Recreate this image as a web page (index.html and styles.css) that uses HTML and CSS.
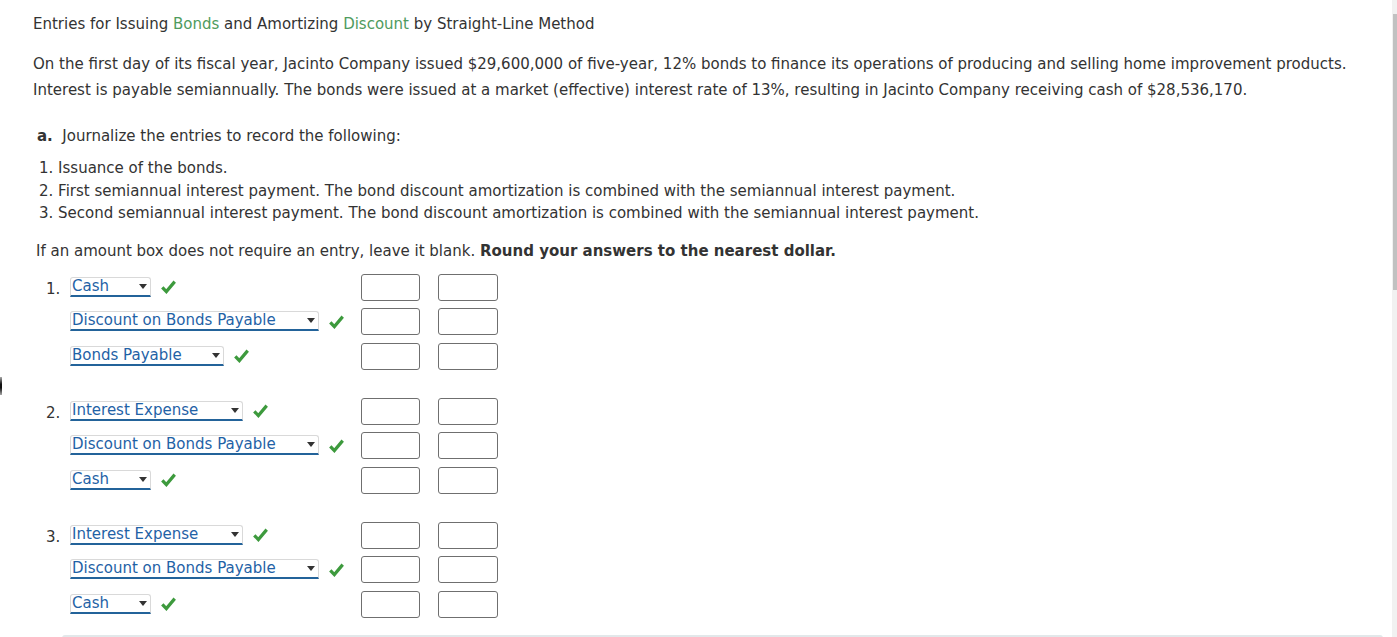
FILE: index.html
```html
<!DOCTYPE html>
<html>
<head>
<meta charset="utf-8">
<link rel="stylesheet" href="styles.css">
</head>
<body>
<div class="page">
  <div class="title">Entries for Issuing <span class="term">Bonds</span> and Amortizing <span class="term">Discount</span> by Straight-Line Method</div>
  <p class="para">On the first day of its fiscal year, Jacinto Company issued $29,600,000 of five-year, 12% bonds to finance its operations of producing and selling home improvement products. Interest is payable semiannually. The bonds were issued at a market (effective) interest rate of 13%, resulting in Jacinto Company receiving cash of $28,536,170.</p>
  <div class="part"><b>a.</b>&nbsp; Journalize the entries to record the following:</div>
  <ol class="tasks">
    <li>Issuance of the bonds.</li>
    <li>First semiannual interest payment. The bond discount amortization is combined with the semiannual interest payment.</li>
    <li>Second semiannual interest payment. The bond discount amortization is combined with the semiannual interest payment.</li>
  </ol>
  <div class="note">If an amount box does not require an entry, leave it blank. <b>Round your answers to the nearest dollar.</b></div>

  <div class="journal">
    <div class="group">
      <div class="row">
        <div class="num">1.</div>
        <div class="acct"><span class="sel w-cash">Cash<svg class="arr" viewBox="0 0 8 5"><path d="M0 0h8L4 5z"/></svg></span><svg class="chk" viewBox="0 0 14 13"><path d="M1.2 6.8L5 10.8 12.8 1.5"/></svg></div>
        <div class="box"></div><div class="box"></div>
      </div>
      <div class="row">
        <div class="num"></div>
        <div class="acct"><span class="sel w-disc">Discount on Bonds Payable<svg class="arr" viewBox="0 0 8 5"><path d="M0 0h8L4 5z"/></svg></span><svg class="chk" viewBox="0 0 14 13"><path d="M1.2 6.8L5 10.8 12.8 1.5"/></svg></div>
        <div class="box"></div><div class="box"></div>
      </div>
      <div class="row">
        <div class="num"></div>
        <div class="acct"><span class="sel w-bp">Bonds Payable<svg class="arr" viewBox="0 0 8 5"><path d="M0 0h8L4 5z"/></svg></span><svg class="chk" viewBox="0 0 14 13"><path d="M1.2 6.8L5 10.8 12.8 1.5"/></svg></div>
        <div class="box"></div><div class="box"></div>
      </div>
    </div>

    <div class="group">
      <div class="row">
        <div class="num">2.</div>
        <div class="acct"><span class="sel w-int">Interest Expense<svg class="arr" viewBox="0 0 8 5"><path d="M0 0h8L4 5z"/></svg></span><svg class="chk" viewBox="0 0 14 13"><path d="M1.2 6.8L5 10.8 12.8 1.5"/></svg></div>
        <div class="box"></div><div class="box"></div>
      </div>
      <div class="row">
        <div class="num"></div>
        <div class="acct"><span class="sel w-disc">Discount on Bonds Payable<svg class="arr" viewBox="0 0 8 5"><path d="M0 0h8L4 5z"/></svg></span><svg class="chk" viewBox="0 0 14 13"><path d="M1.2 6.8L5 10.8 12.8 1.5"/></svg></div>
        <div class="box"></div><div class="box"></div>
      </div>
      <div class="row">
        <div class="num"></div>
        <div class="acct"><span class="sel w-cash">Cash<svg class="arr" viewBox="0 0 8 5"><path d="M0 0h8L4 5z"/></svg></span><svg class="chk" viewBox="0 0 14 13"><path d="M1.2 6.8L5 10.8 12.8 1.5"/></svg></div>
        <div class="box"></div><div class="box"></div>
      </div>
    </div>

    <div class="group">
      <div class="row">
        <div class="num">3.</div>
        <div class="acct"><span class="sel w-int">Interest Expense<svg class="arr" viewBox="0 0 8 5"><path d="M0 0h8L4 5z"/></svg></span><svg class="chk" viewBox="0 0 14 13"><path d="M1.2 6.8L5 10.8 12.8 1.5"/></svg></div>
        <div class="box"></div><div class="box"></div>
      </div>
      <div class="row">
        <div class="num"></div>
        <div class="acct"><span class="sel w-disc">Discount on Bonds Payable<svg class="arr" viewBox="0 0 8 5"><path d="M0 0h8L4 5z"/></svg></span><svg class="chk" viewBox="0 0 14 13"><path d="M1.2 6.8L5 10.8 12.8 1.5"/></svg></div>
        <div class="box"></div><div class="box"></div>
      </div>
      <div class="row">
        <div class="num"></div>
        <div class="acct"><span class="sel w-cash">Cash<svg class="arr" viewBox="0 0 8 5"><path d="M0 0h8L4 5z"/></svg></span><svg class="chk" viewBox="0 0 14 13"><path d="M1.2 6.8L5 10.8 12.8 1.5"/></svg></div>
        <div class="box"></div><div class="box"></div>
      </div>
    </div>
  </div>
  <div class="next-panel"></div>
</div>
<div class="edge-tab"></div>
<div class="scroll-track"><div class="scroll-thumb"></div></div>
</body>
</html>
```

FILE: styles.css
```css
html, body {
  margin: 0;
  padding: 0;
  background: #fff;
  overflow: hidden;
  height: 637px;
}
body {
  font-family: "DejaVu Sans", Verdana, sans-serif;
  font-size: 15px;
  color: #333;
}
.page {
  padding: 14px 0 0 33px;
  width: 1340px;
}
.title {
  line-height: 20px;
}
.term {
  color: #4f9b5e;
}
.para {
  margin: 17px 0 0 0;
  line-height: 26px;
}
.part {
  margin: 22px 0 0 4px;
  line-height: 22px;
}
.tasks {
  margin: 10px 0 0 6px;
  padding: 0;
  list-style: none;
  counter-reset: t;
  line-height: 22.5px;
}
.tasks li {
  counter-increment: t;
}
.tasks li::before {
  content: counter(t) ". ";
}
.note {
  margin: 15px 0 0 3px;
  line-height: 22px;
}
.journal {
  margin-top: 12px;
  margin-left: 13px;
  display: flex;
  flex-direction: column;
  gap: 28px;
}
.group {
  display: flex;
  flex-direction: column;
  gap: 7.5px;
}
.row {
  display: flex;
  align-items: center;
  height: 27px;
}
.row .num {
  width: 24px;
  padding-top: 4px;
}
.row .acct {
  width: 291px;
  display: flex;
  align-items: center;
}
.sel {
  position: relative;
  display: inline-block;
  box-sizing: border-box;
  height: 20px;
  line-height: 17px;
  padding-left: 1px;
  color: #1f62a6;
  background: #fff;
  border: 1px solid #d9d9d9;
  border-bottom: 2px solid #23639a;
  border-radius: 3px 3px 0 0;
  margin-top: -1px;
}
.w-cash { width: 81px; }
.w-bp { width: 154px; }
.w-int { width: 173px; }
.w-disc { width: 249px; }
.arr {
  position: absolute;
  right: 3px;
  top: 6px;
  width: 8px;
  height: 5px;
  fill: #333;
}
.chk {
  width: 15px;
  height: 14px;
  margin-left: 10px;
  fill: none;
  stroke: #3d9a3d;
  stroke-width: 3;
}
.box {
  box-sizing: border-box;
  width: 59px;
  height: 27px;
  border: 1.5px solid #6f6f6f;
  border-radius: 3px;
  background: #fff;
}
.box + .box {
  margin-left: 18px;
  width: 60px;
}
.next-panel {
  margin: 17px 0 0 29px;
  width: 1321px;
  height: 10px;
  border-top: 3px solid #e2e8ea;
  border-radius: 3px 3px 0 0;
}
.edge-tab {
  position: fixed;
  left: 0;
  top: 377px;
  width: 2px;
  height: 18px;
  background: linear-gradient(#aaa, #111 40%, #111 60%, #aaa);
}
.scroll-track {
  position: fixed;
  top: 0;
  right: 0;
  width: 5px;
  height: 637px;
  background: #f1f1f1;
}
.scroll-thumb {
  margin-top: 14px;
  margin-left: 1px;
  width: 4px;
  height: 276px;
  background: #c1c1c1;
}
```
